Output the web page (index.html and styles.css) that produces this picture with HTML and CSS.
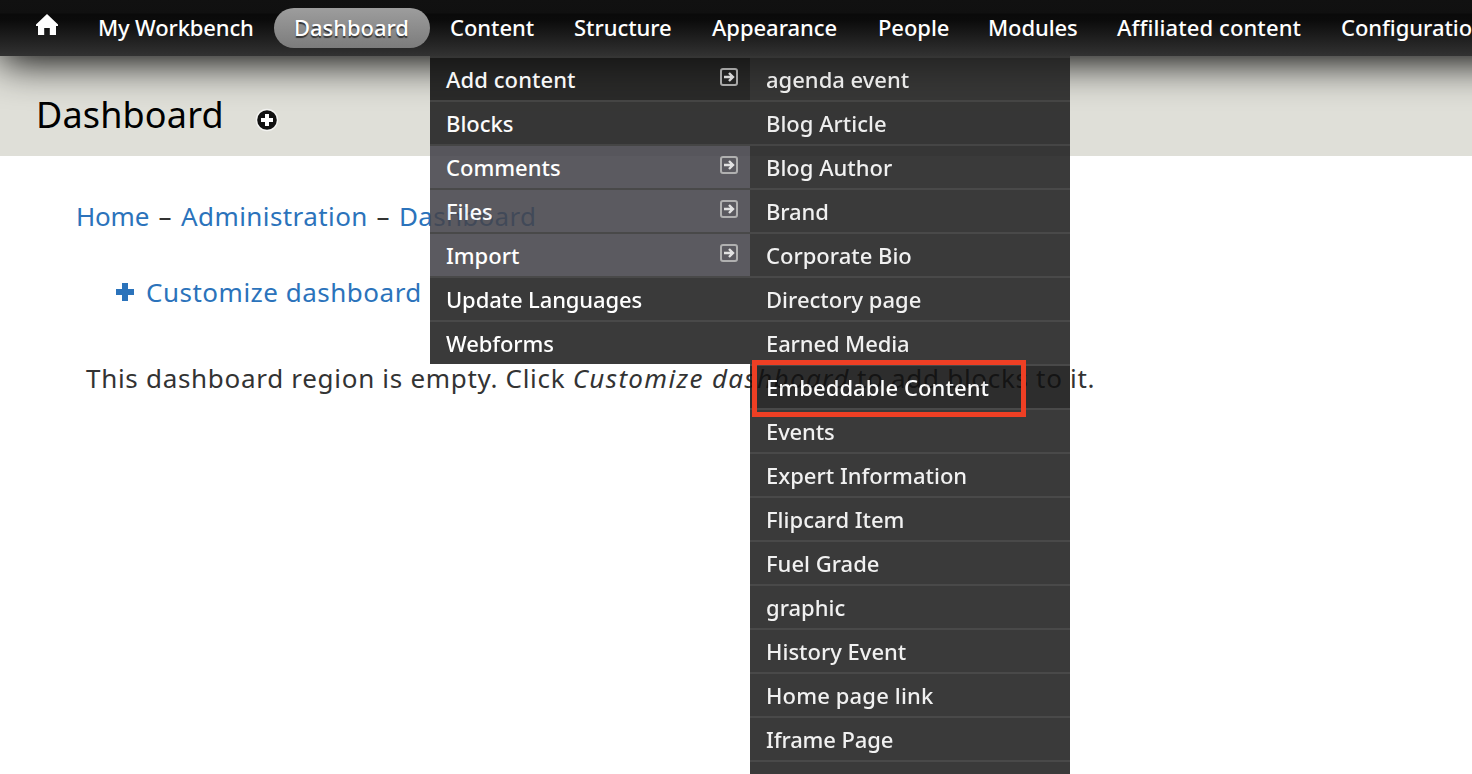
FILE: index.html
```html
<!DOCTYPE html>
<html lang="en">
<head>
<meta charset="utf-8">
<title>Dashboard</title>
<link rel="stylesheet" href="styles.css">
</head>
<body>
<svg class="defs" width="0" height="0" aria-hidden="true">
  <symbol id="expand" viewBox="0 0 18 18">
    <rect x="1" y="1" width="16" height="16" rx="2" fill="none" stroke="#a6a6a6" stroke-width="2"/>
    <path d="M4 9H13M9 5L13 9L9 13" fill="none" stroke="#dedede" stroke-width="2.4"/>
  </symbol>
</svg>

<header class="toolbar">
  <nav class="toolbar-nav">
    <a class="nav-item home" href="#" aria-label="Home"><svg width="24" height="24" viewBox="0 0 24 24"><path d="M12 1L23 11.5V13H21V22H14.8V15H9.2V22H3V13H1V11.5Z" fill="#fff"/></svg></a>
    <a class="nav-item workbench" href="#">My Workbench</a>
    <a class="nav-item dashboard active" href="#">Dashboard</a>
    <a class="nav-item content" href="#">Content</a>
    <a class="nav-item structure" href="#">Structure</a>
    <a class="nav-item appearance" href="#">Appearance</a>
    <a class="nav-item people" href="#">People</a>
    <a class="nav-item modules" href="#">Modules</a>
    <a class="nav-item affiliated" href="#">Affiliated content</a>
    <a class="nav-item configuration" href="#">Configuration</a>
  </nav>
  <div class="dropdown">
    <ul class="menu">
      <li class="hover">Add content<svg class="arrow"><use href="#expand"/></svg></li>
      <li>Blocks</li>
      <li class="parent">Comments<svg class="arrow"><use href="#expand"/></svg></li>
      <li class="parent">Files<svg class="arrow"><use href="#expand"/></svg></li>
      <li class="parent">Import<svg class="arrow"><use href="#expand"/></svg></li>
      <li class="tight">Update Languages</li>
      <li class="tight">Webforms</li>
    </ul>
    <ul class="menu submenu">
      <li>agenda event</li>
      <li>Blog Article</li>
      <li>Blog Author</li>
      <li class="tight">Brand</li>
      <li>Corporate Bio</li>
      <li>Directory page</li>
      <li class="tight">Earned Media</li>
      <li class="hover">Embeddable Content</li>
      <li class="tight">Events</li>
      <li>Expert Information</li>
      <li>Flipcard Item</li>
      <li>Fuel Grade</li>
      <li>graphic</li>
      <li>History Event</li>
      <li class="wide">Home page link</li>
      <li class="tight">Iframe Page</li>
      <li></li>
    </ul>
  </div>
  <div class="highlight"></div>
</header>

<div class="branding">
  <h1>Dashboard</h1>
  <svg class="add" width="24" height="24" viewBox="0 0 24 24"><circle cx="12" cy="12" r="11.2" fill="#fff" opacity=".65"/><circle cx="12" cy="12" r="9.8" fill="#111"/><path d="M12 6V18M6 12H18" stroke="#fff" stroke-width="4"/></svg>
</div>

<main class="page">
  <div class="breadcrumb"><a class="b-home" href="#">Home</a><span>–</span><a class="b-admin" href="#">Administration</a><span>–</span><a class="b-dash" href="#">Dashboard</a></div>
  <a class="customize" href="#"><svg width="18" height="18" viewBox="0 0 18 18"><path d="M6 0H12V6H18V12H12V18H6V12H0V6H6Z" fill="#2b73bb"/></svg>Customize dashboard</a>
  <p class="empty">This dashboard region is empty. Click <em>Customize dashboard</em> to add blocks to it.</p>
</main>
</body>
</html>
```
FILE: styles.css
```css
* { box-sizing: border-box; }

body {
  margin: 0;
  width: 1472px;
  height: 774px;
  overflow: hidden;
  position: relative;
  background: #fff;
  color: #333;
  font: 26px "Noto Sans", "Open Sans", sans-serif;
}

a { color: inherit; text-decoration: none; }
.defs { display: block; }

/* Toolbar */
.toolbar {
  position: relative;
  z-index: 2;
  width: 1560px;
  height: 56px;
  background: linear-gradient(#111 0, #101010 13px, #0a0a0a 14px, #0b0b0b 20px, #323232 56px);
  box-shadow: 0 6px 40px #000;
  font-size: 22px;
  font-weight: 500;
  color: #fff;
}
.toolbar-nav { display: flex; padding: 8px 0 0 16px; }
.nav-item {
  flex: none;
  height: 40px;
  padding-left: 20px;
  line-height: 39px;
  letter-spacing: -.05px;
  white-space: nowrap;
}
.home { width: 62px; padding: 5px 0 0 19px; line-height: 0; }
.workbench { width: 196px; letter-spacing: -.15px; }
.dashboard { width: 156px; }
.content { width: 124px; }
.structure { width: 138px; }
.appearance { width: 166px; }
.people { width: 110px; }
.modules { width: 129px; letter-spacing: -.1px; }
.affiliated { width: 224px; letter-spacing: .1px; }
.configuration { width: 200px; }
.active {
  border-radius: 20px;
  background: linear-gradient(#9d9d9d, #7c7c7c);
  text-shadow: 0 2px 1px #333;
}

/* Open menu and its submenu */
.dropdown {
  position: absolute;
  left: 430px;
  top: 56px;
  display: flex;
  align-items: flex-start;
  opacity: .88;
}
.menu {
  margin: 0;
  padding: 0;
  width: 320px;
  list-style: none;
}
.menu li {
  display: flex;
  justify-content: space-between;
  height: 44px;
  padding: 0 12px 0 16px;
  border-top: 2px solid #303030;
  background: #1f1f1f;
  line-height: 42px;
  letter-spacing: 0;
}
.menu .tight { letter-spacing: -.12px; }
.menu .wide { letter-spacing: .15px; }
.menu .parent { background: #45444a; }
.menu .hover { background: #101010; letter-spacing: .08px; }
.submenu li { color: #efefef; }
.submenu .hover { color: #fff; }
.arrow { width: 18px; height: 18px; margin-top: 10px; }

.highlight {
  position: absolute;
  left: 752px;
  top: 360px;
  width: 274px;
  height: 57px;
  border: 5px solid #ee3f24;
}

/* Page heading */
.branding {
  display: flex;
  align-items: center;
  gap: 31px;
  height: 100px;
  padding: 0 0 0 36px;
  background: #dfdfd8;
  color: #000;
}
h1 {
  margin: 0;
  font-size: 36px;
  font-weight: 400;
  line-height: 100px;
  height: 100px;
  padding-top: 9px;
  letter-spacing: .15px;
}
.add { margin-top: 28px; }

/* Page body */
.page { padding: 40px 0 0 76px; line-height: 40px; }
.breadcrumb { display: flex; color: #333; }
.breadcrumb a, .customize { color: #2b73bb; }
.breadcrumb span { width: 32px; text-align: center; }
.b-home { width: 73px; letter-spacing: -.2px; }
.b-admin { width: 186px; letter-spacing: .42px; }
.b-dash { letter-spacing: .3px; }
.customize {
  display: flex;
  align-items: center;
  gap: 12px;
  margin-top: 36px;
  padding-left: 40px;
  letter-spacing: .5px;
}
.empty { margin: 46px 0 0 10px; white-space: nowrap; letter-spacing: .7px; }
.empty em { letter-spacing: 1.36px; }
```
